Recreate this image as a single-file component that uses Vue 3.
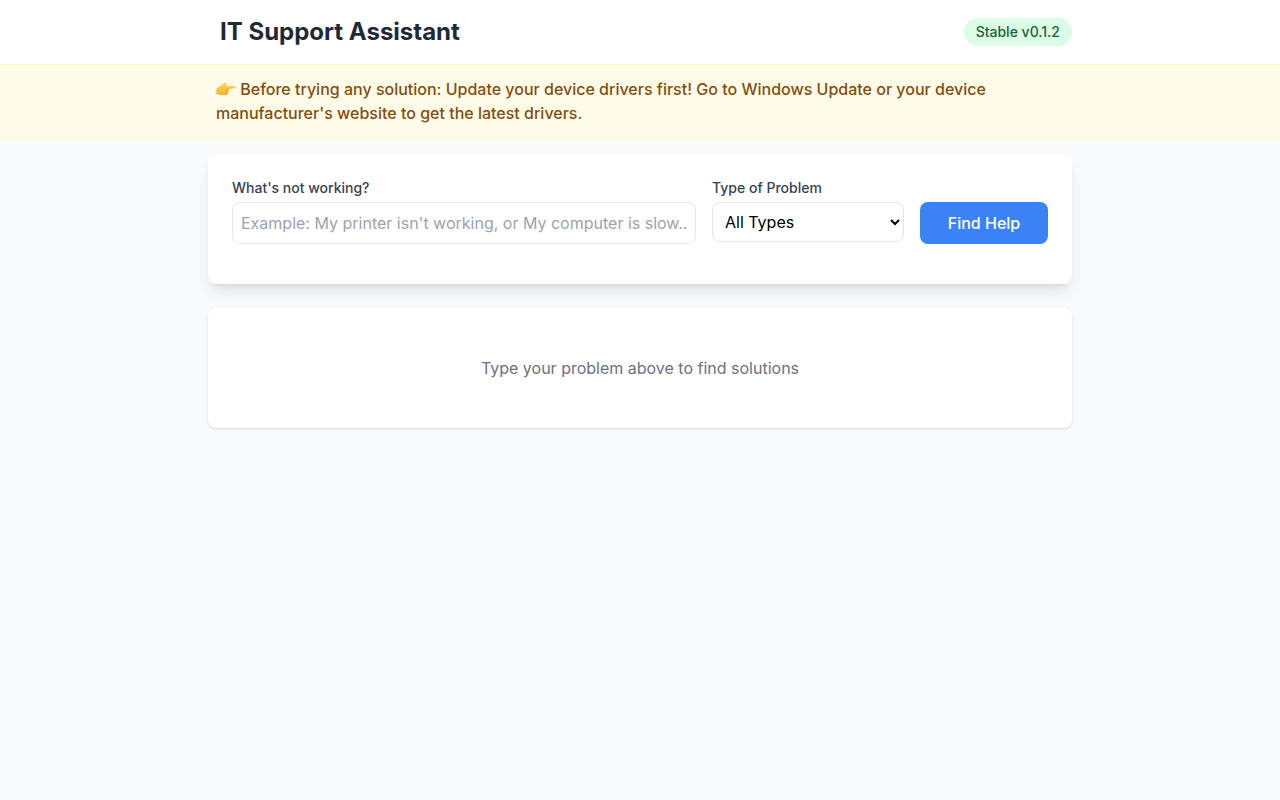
<script setup>
import { ref } from 'vue'

const query = ref('')
const type = ref('All Types')
const types = ['All Types', 'Hardware', 'Software', 'Network']
</script>

<template>
  <div class="page">
    <header class="header">
      <div class="container header-row">
        <h1>IT Support Assistant</h1>
        <span class="badge">Stable v0.1.2</span>
      </div>
    </header>
    <div class="notice">
      <p class="container notice-text">
        <svg class="hand" viewBox="0 0 20 16" aria-hidden="true">
          <defs>
            <linearGradient id="skin" x1="0" y1="0" x2="0" y2="1">
              <stop offset="0" stop-color="#ffd75e" />
              <stop offset="1" stop-color="#f8b62c" />
            </linearGradient>
          </defs>
          <path d="M0.300 8C1.500 6.500 3 5.800 4.500 4.800L8.500 2.100C9.800 1.200 11 2.400 10.200 3.500L9.300 4.700L18.300 5C20.200 5.100 20.200 7.500 18.300 7.600L12.800 7.900C13.400 8.700 13.100 9.600 12.500 9.900C12.900 10.900 12.500 11.600 11.900 11.900C12 13.100 11.200 13.800 10.200 13.900L4.500 14C2.800 14 1.500 13.200 0.300 13Z" fill="url(#skin)" />
          <path d="M9.300 4.700C8.700 5.800 7.500 6.700 6.500 7M12.800 7.900H9M12.500 9.900H9M11.900 11.900H8.500" fill="none" stroke="#e79a20" stroke-width="0.600" />
        </svg>
        Before trying any solution: Update your device drivers first! Go to Windows Update or your device manufacturer's website to get the latest drivers.
      </p>
    </div>
    <main class="container main">
      <form class="card search" @submit.prevent>
        <div class="field grow">
          <label for="problem">What's not working?</label>
          <input id="problem" v-model="query" type="text" placeholder="Example: My printer isn't working, or My computer is slow..." />
        </div>
        <div class="field type">
          <label for="type">Type of Problem</label>
          <select id="type" v-model="type">
            <option v-for="t in types" :key="t">{{ t }}</option>
          </select>
        </div>
        <button type="submit">Find Help</button>
      </form>
      <section class="card results">
        <p>Type your problem above to find solutions</p>
      </section>
    </main>
  </div>
</template>

<style>
body {
  margin: 0;
  background: #f9fafb;
}
</style>

<style scoped>
.page,
.page * {
  box-sizing: border-box;
}
.page {
  min-height: 100vh;
  background: #f9fafb;
  font-family: Inter, sans-serif;
  font-size: 16px;
  line-height: 24px;
  color: #111827;
}
.container {
  width: 100%;
  max-width: 896px;
  margin: 0 auto;
  padding: 0 16px;
}
.header {
  background: #fff;
}
.header-row {
  display: flex;
  align-items: center;
  justify-content: space-between;
  padding-top: 16px;
  padding-bottom: 16px;
}
h1 {
  margin: 0;
  padding-left: 12px;
  font-size: 24px;
  line-height: 32px;
  font-weight: 700;
  color: #1f2937;
}
.badge {
  padding: 4px 12px;
  border-radius: 999px;
  background: #dcfce7;
  color: #166534;
  font-size: 14px;
  line-height: 20px;
  font-weight: 500;
}
.notice {
  padding: 12px 0;
  border-top: 1px solid #fef9c3;
  border-bottom: 1px solid #fef9c3;
  background: #fefce8;
}
.notice-text {
  padding: 0 24px;
  font-weight: 500;
  color: #854d0e;
}
.hand {
  width: 20px;
  height: 16px;
  vertical-align: -2px;
}
.main {
  padding-top: 16px;
}
.card {
  border-radius: 8px;
  background: #fff;
}
.search {
  display: flex;
  align-items: flex-start;
  gap: 16px;
  padding: 24px 24px 40px;
  box-shadow: 0 10px 15px -3px rgba(0, 0, 0, 0.1), 0 4px 6px -4px rgba(0, 0, 0, 0.1);
}
.field {
  min-width: 0;
}
.grow {
  flex: 1;
}
.type {
  width: 192px;
}
label {
  display: block;
  margin-bottom: 4px;
  font-size: 14px;
  line-height: 20px;
  font-weight: 500;
  color: #374151;
}
input,
select {
  display: block;
  width: 100%;
  margin: 0;
  border: 1px solid #e5e7eb;
  border-radius: 8px;
  background: #fff;
  font: inherit;
  color: #000;
}
input {
  height: 42px;
  padding: 8px;
}
input::placeholder {
  color: #9ca3af;
}
select {
  height: 40px;
  padding: 8px;
}
button {
  width: 128px;
  height: 42px;
  margin: 24px 0 0;
  padding: 0;
  border: 0;
  border-radius: 8px;
  background: #3b82f6;
  color: #fff;
  font: inherit;
  font-weight: 500;
}
.results {
  margin-top: 24px;
  padding: 48px 24px;
  box-shadow: 0 1px 3px rgba(0, 0, 0, 0.1), 0 1px 2px -1px rgba(0, 0, 0, 0.1);
  text-align: center;
}
.results p {
  margin: 0;
  color: #6b7280;
}
</style>
